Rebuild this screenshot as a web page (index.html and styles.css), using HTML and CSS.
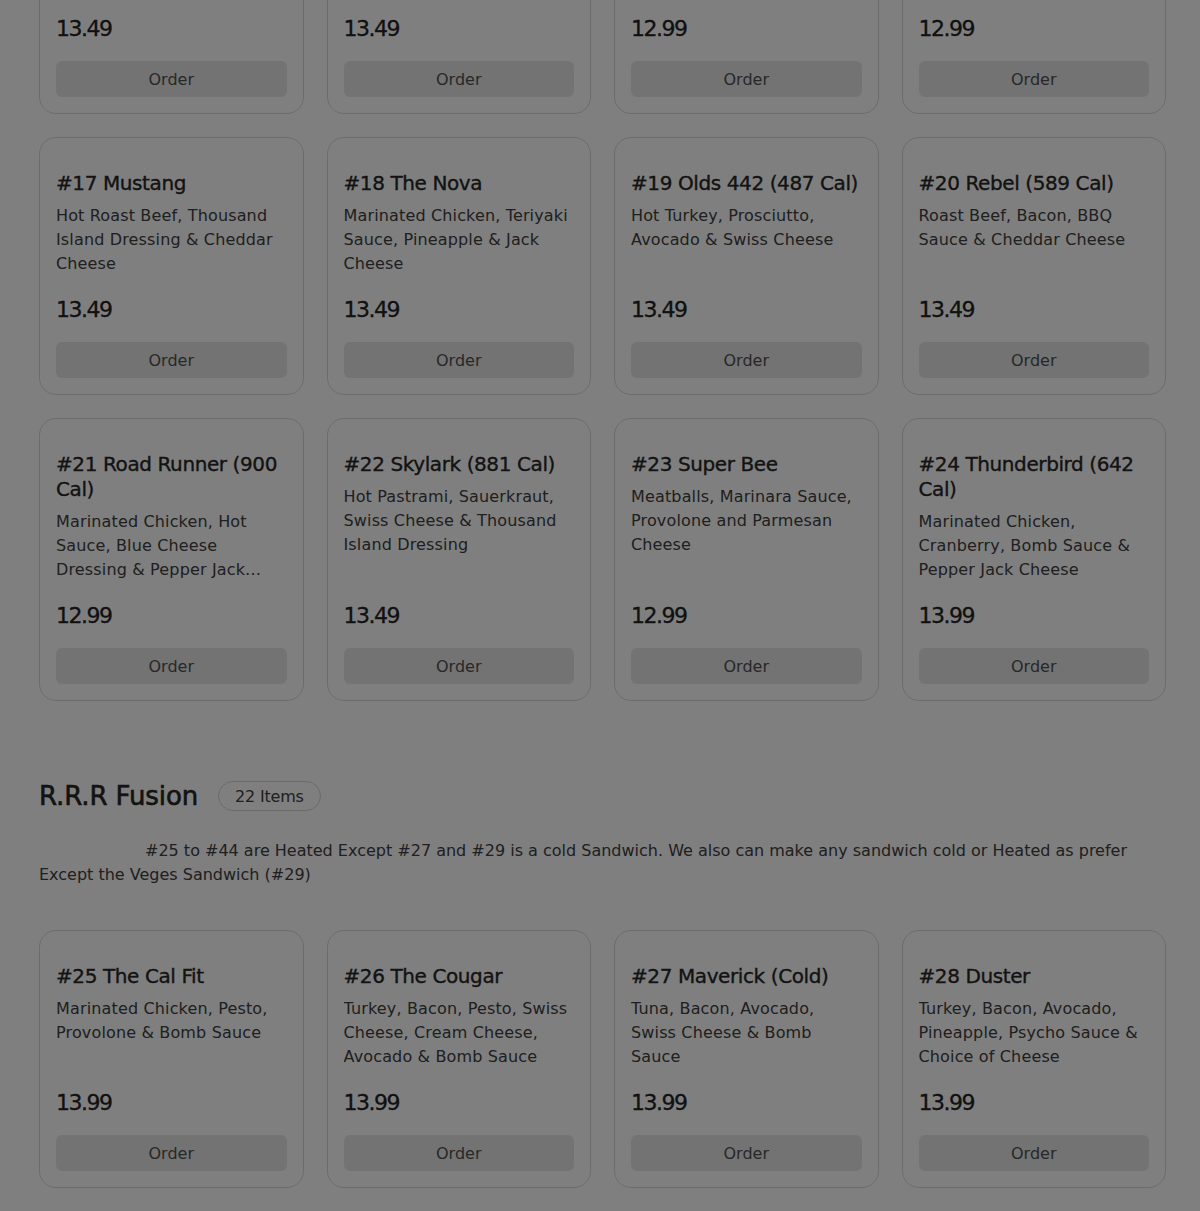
FILE: index.html
```html
<!DOCTYPE html>
<html lang="en">
<head>
<meta charset="utf-8">
<title>Menu</title>
<link rel="stylesheet" href="styles.css">
</head>
<body>
<main class="page">
  <section class="section">
    <div class="grid">
      <article class="card"><h3 class="card-title">#13 Impala</h3><p class="card-desc">Hot Pastrami, Swiss Cheese &amp; Mustard</p><div class="card-price">13.49</div><button class="order-btn">Order</button></article>
      <article class="card"><h3 class="card-title">#14 Javelin</h3><p class="card-desc">Turkey, Bacon, Avocado &amp; Swiss Cheese</p><div class="card-price">13.49</div><button class="order-btn">Order</button></article>
      <article class="card"><h3 class="card-title">#15 Malibu</h3><p class="card-desc">Ham, Salami &amp; Provolone Cheese</p><div class="card-price">12.99</div><button class="order-btn">Order</button></article>
      <article class="card"><h3 class="card-title">#16 Monte Carlo</h3><p class="card-desc">Turkey, Ham &amp; Cheddar Cheese</p><div class="card-price">12.99</div><button class="order-btn">Order</button></article>

      <article class="card"><h3 class="card-title">#17 Mustang</h3><p class="card-desc">Hot Roast Beef, Thousand Island Dressing &amp; Cheddar Cheese</p><div class="card-price">13.49</div><button class="order-btn">Order</button></article>
      <article class="card"><h3 class="card-title">#18 The Nova</h3><p class="card-desc">Marinated Chicken, Teriyaki Sauce, Pineapple &amp; Jack Cheese</p><div class="card-price">13.49</div><button class="order-btn">Order</button></article>
      <article class="card"><h3 class="card-title">#19 Olds 442 (487 Cal)</h3><p class="card-desc">Hot Turkey, Prosciutto, Avocado &amp; Swiss Cheese</p><div class="card-price">13.49</div><button class="order-btn">Order</button></article>
      <article class="card"><h3 class="card-title">#20 Rebel (589 Cal)</h3><p class="card-desc">Roast Beef, Bacon, BBQ Sauce &amp; Cheddar Cheese</p><div class="card-price">13.49</div><button class="order-btn">Order</button></article>

      <article class="card"><h3 class="card-title">#21 Road Runner (900 Cal)</h3><p class="card-desc">Marinated Chicken, Hot Sauce, Blue Cheese Dressing &amp; Pepper Jack Cheese</p><div class="card-price">12.99</div><button class="order-btn">Order</button></article>
      <article class="card"><h3 class="card-title">#22 Skylark (881 Cal)</h3><p class="card-desc">Hot Pastrami, Sauerkraut, Swiss Cheese &amp; Thousand Island Dressing</p><div class="card-price">13.49</div><button class="order-btn">Order</button></article>
      <article class="card"><h3 class="card-title">#23 Super Bee</h3><p class="card-desc">Meatballs, Marinara Sauce, Provolone and Parmesan Cheese</p><div class="card-price">12.99</div><button class="order-btn">Order</button></article>
      <article class="card"><h3 class="card-title">#24 Thunderbird (642 Cal)</h3><p class="card-desc">Marinated Chicken, Cranberry, Bomb Sauce &amp; Pepper Jack Cheese</p><div class="card-price">13.99</div><button class="order-btn">Order</button></article>
    </div>
  </section>

  <section class="section section-next">
    <header class="section-head">
      <h2 class="section-title">R.R.R Fusion</h2>
      <span class="count-badge">22 Items</span>
    </header>
    <p class="section-note">#25 to #44 are Heated Except #27 and #29 is a cold Sandwich. We also can make any sandwich cold or Heated as prefer Except the Veges Sandwich (#29)</p>
    <div class="grid">
      <article class="card"><h3 class="card-title">#25 The Cal Fit</h3><p class="card-desc">Marinated Chicken, Pesto, Provolone &amp; Bomb Sauce</p><div class="card-price">13.99</div><button class="order-btn">Order</button></article>
      <article class="card"><h3 class="card-title">#26 The Cougar</h3><p class="card-desc">Turkey, Bacon, Pesto, Swiss Cheese, Cream Cheese, Avocado &amp; Bomb Sauce</p><div class="card-price">13.99</div><button class="order-btn">Order</button></article>
      <article class="card"><h3 class="card-title">#27 Maverick (Cold)</h3><p class="card-desc">Tuna, Bacon, Avocado, Swiss Cheese &amp; Bomb Sauce</p><div class="card-price">13.99</div><button class="order-btn">Order</button></article>
      <article class="card"><h3 class="card-title">#28 Duster</h3><p class="card-desc">Turkey, Bacon, Avocado, Pineapple, Psycho Sauce &amp; Choice of Cheese</p><div class="card-price">13.99</div><button class="order-btn">Order</button></article>

      <article class="card"><h3 class="card-title">#29 The Veges</h3><p class="card-desc">Avocado, Cucumber, Tomato, Pesto &amp; Provolone</p><div class="card-price">12.99</div><button class="order-btn">Order</button></article>
      <article class="card"><h3 class="card-title">#30 El Camino</h3><p class="card-desc">Carne Asada, Jalapeno, Salsa &amp; Pepper Jack</p><div class="card-price">13.99</div><button class="order-btn">Order</button></article>
      <article class="card"><h3 class="card-title">#31 Firebird</h3><p class="card-desc">Spicy Chicken, Bacon &amp; Chipotle Sauce</p><div class="card-price">13.99</div><button class="order-btn">Order</button></article>
      <article class="card"><h3 class="card-title">#32 Galaxie</h3><p class="card-desc">Turkey, Ham, Salami &amp; Provolone</p><div class="card-price">13.99</div><button class="order-btn">Order</button></article>
    </div>
  </section>
</main>
<div class="backdrop"></div>
</body>
</html>
```
FILE: styles.css
```css
* { box-sizing: border-box; }
html, body { margin: 0; padding: 0; }
body {
  background: #ffffff;
  font-family: "DejaVu Sans", "Noto Sans", sans-serif;
  color: #333;
  height: 1211px;
  overflow: hidden;
}
.page {
  width: 1127px;
  margin: -144px 0 0 39px;
}
.grid {
  display: grid;
  grid-template-columns: repeat(4, 1fr);
  column-gap: 23px;
  row-gap: 23px;
}
.card {
  display: flex;
  flex-direction: column;
  border: 1px solid #d9d9d9;
  border-radius: 17px;
  padding: 33px 16px 16px;
  background: #fff;
}
.card-title {
  margin: 0 0 8px;
  font-size: 20px;
  line-height: 25px;
  font-weight: 400;
  color: #262626;
  letter-spacing: -0.4px;
  -webkit-text-stroke: 0.35px currentColor;
}
.card-desc {
  margin: 0;
  font-size: 16px;
  line-height: 24px;
  min-height: 72px;
  color: #404040;
  letter-spacing: 0.15px;
  display: -webkit-box;
  -webkit-line-clamp: 3;
  -webkit-box-orient: vertical;
  overflow: hidden;
}
.card-price {
  margin-top: auto;
  padding-top: 22px;
  font-size: 22px;
  line-height: 24px;
  font-weight: 400;
  color: #222;
  letter-spacing: -1.5px;
  -webkit-text-stroke: 0.3px currentColor;
}
.order-btn {
  margin-top: 20px;
  height: 36px;
  border: 0;
  border-radius: 6px;
  background: #e6e6e6;
  color: #505050;
  font-family: inherit;
  font-size: 16px;
  letter-spacing: 0;
}
.section-next {
  margin-top: 80px;
}
.section-head {
  display: flex;
  align-items: center;
  gap: 20px;
}
.section-title {
  margin: 0;
  font-size: 26px;
  line-height: 30px;
  font-weight: 400;
  color: #262626;
  letter-spacing: -0.1px;
  -webkit-text-stroke: 0.6px currentColor;
}
.count-badge {
  display: inline-flex;
  align-items: center;
  height: 30px;
  padding: 0 16px;
  border: 1px solid #d6d6d6;
  border-radius: 15px;
  font-size: 16px;
  color: #404040;
  letter-spacing: -0.2px;
}
.section-note {
  margin: 28px 0 43px;
  font-size: 16px;
  line-height: 24px;
  color: #404040;
  text-indent: 106px;
  letter-spacing: 0;
}
.backdrop {
  position: fixed;
  inset: 0;
  background: rgba(0, 0, 0, 0.5);
}
```
